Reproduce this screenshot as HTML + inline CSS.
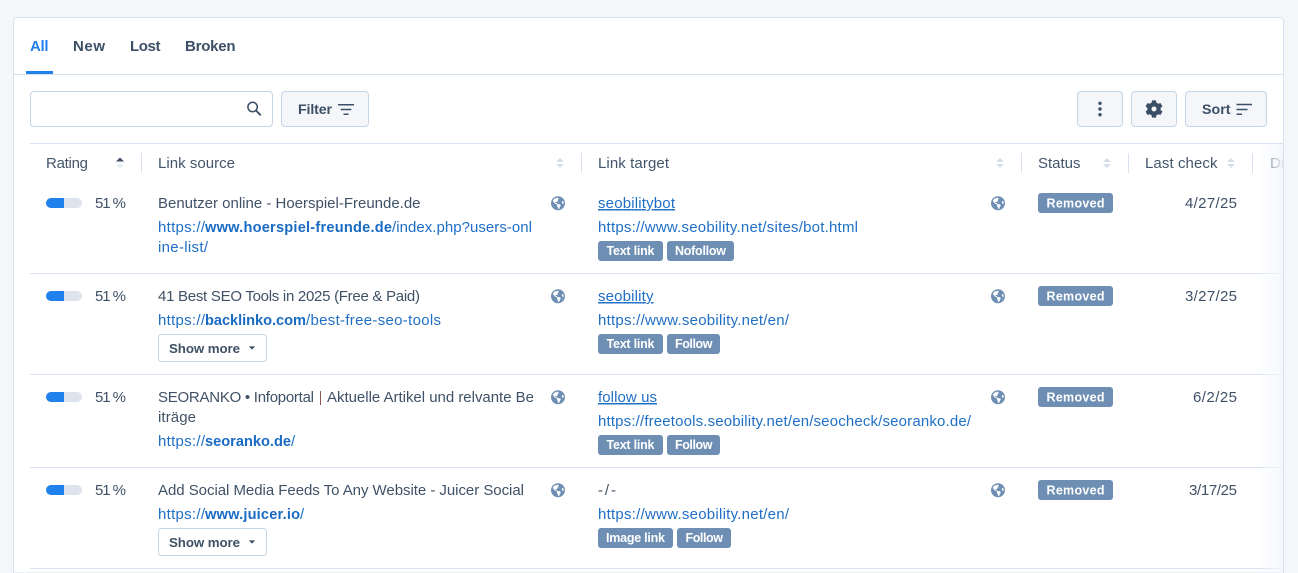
<!DOCTYPE html>
<html lang="en"><head><meta charset="utf-8"><title>Backlinks</title>
<style>
html,body{margin:0;padding:0;background:#f4f6fa;width:1298px;height:573px;overflow:hidden}
svg{display:block}
text{font-family:"Liberation Sans",sans-serif;font-size:15px;fill:#3f5166}
.tab{font-weight:700;font-size:15px;fill:#3b4f66}
.btn{font-weight:700;font-size:14.2px;fill:#3b4f66}
.h{font-size:15px;fill:#43566c}
.l{fill:#1f6fc6}
.b{fill:#1a6bc4;font-weight:700;font-size:14.6px}
.bd{font-weight:700;font-size:12.5px;fill:#fff}
.sm{font-weight:700;font-size:13.3px;fill:#3f5166}
.badge{fill:#6e8fb3}
.sep{stroke:#d8e2ee;stroke-width:1}
.ctl{fill:#f4f6fa;stroke:#c5d4e6;stroke-width:1}
</style></head><body>
<svg width="1298" height="573" viewBox="0 0 1298 573" xmlns="http://www.w3.org/2000/svg">
<defs>
<linearGradient id="fade" x1="0" x2="1" y1="0" y2="0"><stop offset="0" stop-color="#f3f6fa" stop-opacity="0"/><stop offset="1" stop-color="#f3f6fa" stop-opacity=".9"/></linearGradient>
<g id="globe"><g transform="translate(-7 -7) scale(.0282)"><path fill="#6e8fb3" d="M248 8C111.03 8 0 119.03 0 256s111.03 248 248 248 248-111.03 248-248S384.97 8 248 8zm82.29 357.6c-3.9 3.88-7.99 7.95-11.31 11.28-2.99 3-5.1 6.7-6.17 10.71-1.51 5.66-2.73 11.38-4.77 16.87l-17.39 46.85c-13.76 3-28 4.69-42.65 4.69v-27.38c1.69-12.62-7.64-36.26-22.63-51.25-6-6-9.37-14.14-9.37-22.63v-32.01c0-11.64-6.27-22.34-16.46-27.97-14.37-7.95-34.81-19.06-48.81-26.11-11.48-5.78-22.1-13.14-31.65-21.75l-.8-.72a114.792 114.792 0 0 1-18.06-20.74c-9.38-13.77-24.66-36.42-34.59-51.14 20.47-45.5 57.36-82.04 103.2-101.89l24.01 12.01C203.48 89.74 216 82.01 216 70.11v-11.3c7.99-1.29 16.12-2.11 24.42-2.43l28.3 28.3c6.25 6.25 6.25 16.38 0 22.63L264 112l-10.34 10.34c-3.13 3.12-3.13 8.19 0 11.31l4.69 4.69c3.13 3.12 3.13 8.19 0 11.31l-8 8a8.008 8.008 0 0 1-5.66 2.34h-8.99c-2.08 0-4.08.81-5.58 2.27l-9.92 9.65a8.008 8.008 0 0 0-1.58 9.31l15.59 31.19c2.66 5.32-1.21 11.58-7.15 11.58h-5.64c-1.93 0-3.79-.7-5.24-1.96l-9.28-8.06a16.017 16.017 0 0 0-15.55-3.1l-31.17 10.39a11.95 11.95 0 0 0-8.17 11.34c0 4.53 2.56 8.66 6.61 10.69l11.08 5.54c9.41 4.71 19.79 7.16 30.31 7.16s22.59 27.29 32 32h66.75c8.49 0 16.62 3.37 22.63 9.37l13.69 13.69a30.503 30.503 0 0 1 8.93 21.57 46.536 46.536 0 0 1-13.72 32.98zM417 274.25c-5.79-1.45-10.84-5-14.15-9.97l-17.98-26.97a23.97 23.97 0 0 1 0-26.62l19.59-29.38c2.32-3.47 5.5-6.29 9.24-8.15l12.98-6.49C440.2 193.59 448 223.87 448 256c0 8.67-.74 17.16-1.82 25.54L417 274.25z"/></g></g>
<g id="sort"><path d="M0-5 4-1H-4ZM0 5 4 1H-4Z" fill="#d5dfeb"/></g>
<g id="bar"><rect x="0" y="0" width="36" height="10" rx="5" fill="#dde4ee"/><path d="M5 0H18V10H5A5 5 0 0 1 5 0Z" fill="#2081ec"/></g>
<g id="caret"><path d="M-3.2-1.6H3.2L0 1.6Z" fill="#3f5166"/></g>
</defs>
<rect x="0" y="0" width="1298" height="573" fill="#f4f6fa"/>
<path d="M13.5 573V21.5a4 4 0 0 1 4-4H1279.5a4 4 0 0 1 4 4V573Z" fill="#fff" stroke="#d8e2ee"/>
<line x1="14" x2="1283" y1="74.5" y2="74.5" stroke="#d3dfec"/>
<rect x="26" y="71" width="27" height="3" fill="#2081ec"/>
<text class="tab" x="30" y="51" textLength="18.5" style="fill:#2081ec">All</text>
<text class="tab" x="73" y="51" textLength="32">New</text>
<text class="tab" x="130" y="51" textLength="30.5">Lost</text>
<text class="tab" x="185" y="51" textLength="50.5">Broken</text>

<rect x="30.5" y="91.5" width="242" height="35" rx="3.5" fill="#fff" stroke="#c5d4e6"/>
<circle cx="252.6" cy="107" r="4.7" fill="none" stroke="#3b4f66" stroke-width="1.5"/>
<path d="M256 110.5 260.7 115.3" stroke="#3b4f66" stroke-width="1.9" fill="none"/>
<rect class="ctl" x="281.5" y="91.5" width="87" height="35" rx="3.5"/>
<text class="btn" x="298" y="114" textLength="34">Filter</text>
<path d="M338 104.7H354M340.7 109.5H351.3M343.5 114.3H348.5" stroke="#3b4f66" stroke-width="1.5" fill="none"/>

<rect class="ctl" x="1077.5" y="91.5" width="45" height="35" rx="3.5"/>
<circle cx="1100" cy="103.3" r="1.7" fill="#3b4f66"/><circle cx="1100" cy="109" r="1.7" fill="#3b4f66"/><circle cx="1100" cy="114.7" r="1.7" fill="#3b4f66"/>
<rect class="ctl" x="1131.5" y="91.5" width="45" height="35" rx="3.5"/>
<g transform="translate(1154 109)" fill="#3b4f66">
<circle r="4.6" fill="none" stroke="#3b4f66" stroke-width="4.2"/>
<path d="M-2-8.6H2L2.6-5H-2.6Z"/>
<path d="M-2-8.6H2L2.6-5H-2.6Z" transform="rotate(60)"/>
<path d="M-2-8.6H2L2.6-5H-2.6Z" transform="rotate(120)"/>
<path d="M-2-8.6H2L2.6-5H-2.6Z" transform="rotate(180)"/>
<path d="M-2-8.6H2L2.6-5H-2.6Z" transform="rotate(240)"/>
<path d="M-2-8.6H2L2.6-5H-2.6Z" transform="rotate(300)"/>
</g>
<rect class="ctl" x="1185.5" y="91.5" width="81" height="35" rx="3.5"/>
<text class="btn" x="1202" y="114" textLength="28.5">Sort</text>
<path d="M1236.5 104.5H1252M1236.5 109.5H1247.5M1236.5 114.3H1242" stroke="#3b4f66" stroke-width="1.5" fill="none"/>

<line x1="30" x2="1283" y1="143.5" y2="143.5" class="sep"/>
<text class="h" x="46" y="168" textLength="42">Rating</text>
<text class="h" x="158" y="168" textLength="77">Link source</text>
<text class="h" x="598" y="168" textLength="71">Link target</text>
<text class="h" x="1038" y="168" textLength="42.5">Status</text>
<text class="h" x="1145" y="168" textLength="72.5">Last check</text>
<text class="h" x="1270" y="168" textLength="14" style="fill:#5e7085">Di</text>
<g class="sep"><line x1="141.5" x2="141.5" y1="153" y2="173"/><line x1="581.5" x2="581.5" y1="153" y2="173"/><line x1="1021.5" x2="1021.5" y1="153" y2="173"/><line x1="1128.5" x2="1128.5" y1="153" y2="173"/><line x1="1252.5" x2="1252.5" y1="153" y2="173"/></g>
<path d="M120 157.5 124 161.5H116Z" fill="#3b4f66"/><path d="M120 168.5 124 164.5H116Z" fill="#e6ebf2"/>
<use href="#sort" x="560" y="163"/><use href="#sort" x="1000" y="163"/><use href="#sort" x="1107" y="163"/><use href="#sort" x="1231" y="163"/>

<!-- row 1 -->
<use href="#bar" x="46" y="198"/><text x="95" y="208" textLength="31">51 %</text>
<text x="158" y="208" textLength="262.5">Benutzer online - Hoerspiel-Freunde.de</text>
<text class="l" x="158" y="232" textLength="47">https://</text><text class="b" x="205" y="232" textLength="187">www.hoerspiel-freunde.de</text><text class="l" x="392" y="232" textLength="140">/index.php?users-onl</text>
<text class="l" x="158" y="252" textLength="50">ine-list/</text>
<use href="#globe" x="558" y="203"/>
<text class="l" x="598" y="208" textLength="77" text-decoration="underline">seobilitybot</text>
<use href="#globe" x="998" y="203"/>
<text class="l" x="598" y="232" textLength="260">https://www.seobility.net/sites/bot.html</text>
<rect class="badge" x="598" y="241" width="65" height="20" rx="3"/><text class="bd" x="606.5" y="255" textLength="48">Text link</text>
<rect class="badge" x="667" y="241" width="67" height="20" rx="3"/><text class="bd" x="675" y="255" textLength="51">Nofollow</text>
<rect class="badge" x="1038" y="193" width="75" height="20" rx="3"/><text class="bd" x="1046.5" y="207.5" textLength="58">Removed</text>
<text x="1185" y="208" textLength="52">4/27/25</text>
<line x1="30" x2="1283" y1="273.5" y2="273.5" class="sep"/>

<!-- row 2 -->
<use href="#bar" x="46" y="291"/><text x="95" y="301" textLength="31">51 %</text>
<text x="158" y="301" textLength="262">41 Best SEO Tools in 2025 (Free &amp; Paid)</text>
<text class="l" x="158" y="325" textLength="47">https://</text><text class="b" x="205" y="325" textLength="101">backlinko.com</text><text class="l" x="306" y="325" textLength="135">/best-free-seo-tools</text>
<rect x="158.5" y="334.5" width="108" height="27" rx="3" fill="#fff" stroke="#c5d4e6"/>
<text class="sm" x="169" y="353" textLength="71">Show more</text><use href="#caret" x="252" y="348"/>
<use href="#globe" x="558" y="296"/>
<text class="l" x="598" y="301" textLength="55.5" text-decoration="underline">seobility</text>
<use href="#globe" x="998" y="296"/>
<text class="l" x="598" y="325" textLength="191">https://www.seobility.net/en/</text>
<rect class="badge" x="598" y="334" width="65" height="20" rx="3"/><text class="bd" x="606.5" y="348" textLength="48">Text link</text>
<rect class="badge" x="667" y="334" width="53" height="20" rx="3"/><text class="bd" x="675" y="348" textLength="37.5">Follow</text>
<rect class="badge" x="1038" y="286" width="75" height="20" rx="3"/><text class="bd" x="1046.5" y="300.5" textLength="58">Removed</text>
<text x="1185" y="301" textLength="52">3/27/25</text>
<line x1="30" x2="1283" y1="374.5" y2="374.5" class="sep"/>

<!-- row 3 -->
<use href="#bar" x="46" y="392"/><text x="95" y="402" textLength="31">51 %</text>
<text x="158" y="402" textLength="156">SEORANKO • Infoportal</text>
<rect x="320" y="391" width="1" height="14" fill="#8a5a50"/>
<text x="327" y="402" textLength="207">Aktuelle Artikel und relvante Be</text>
<text x="158" y="422" textLength="38">iträge</text>
<text class="l" x="158" y="446" textLength="47">https://</text><text class="b" x="205" y="446" textLength="86">seoranko.de</text><text class="l" x="291" y="446" textLength="4.5">/</text>
<use href="#globe" x="558" y="397"/>
<text class="l" x="598" y="402" textLength="59" text-decoration="underline">follow us</text>
<use href="#globe" x="998" y="397"/>
<text class="l" x="598" y="426" textLength="373">https://freetools.seobility.net/en/seocheck/seoranko.de/</text>
<rect class="badge" x="598" y="435" width="65" height="20" rx="3"/><text class="bd" x="606.5" y="449" textLength="48">Text link</text>
<rect class="badge" x="667" y="435" width="53" height="20" rx="3"/><text class="bd" x="675" y="449" textLength="37.5">Follow</text>
<rect class="badge" x="1038" y="387" width="75" height="20" rx="3"/><text class="bd" x="1046.5" y="401.5" textLength="58">Removed</text>
<text x="1193" y="402" textLength="44">6/2/25</text>
<line x1="30" x2="1283" y1="467.5" y2="467.5" class="sep"/>

<!-- row 4 -->
<use href="#bar" x="46" y="485"/><text x="95" y="495" textLength="31">51 %</text>
<text x="158" y="495" textLength="366">Add Social Media Feeds To Any Website - Juicer Social</text>
<text class="l" x="158" y="519" textLength="47">https://</text><text class="b" x="205" y="519" textLength="95">www.juicer.io</text><text class="l" x="300" y="519" textLength="4.5">/</text>
<rect x="158.5" y="528.5" width="108" height="27" rx="3" fill="#fff" stroke="#c5d4e6"/>
<text class="sm" x="169" y="547" textLength="71">Show more</text><use href="#caret" x="252" y="542"/>
<use href="#globe" x="558" y="490"/>
<text x="598" y="495" textLength="18">-/-</text>
<use href="#globe" x="998" y="490"/>
<text class="l" x="598" y="519" textLength="191">https://www.seobility.net/en/</text>
<rect class="badge" x="598" y="528" width="75" height="20" rx="3"/><text class="bd" x="606" y="542" textLength="59">Image link</text>
<rect class="badge" x="677" y="528" width="54" height="20" rx="3"/><text class="bd" x="685.5" y="542" textLength="37.5">Follow</text>
<rect class="badge" x="1038" y="480" width="75" height="20" rx="3"/><text class="bd" x="1046.5" y="494.5" textLength="58">Removed</text>
<text x="1189" y="495" textLength="48">3/17/25</text>
<line x1="30" x2="1283" y1="568.5" y2="568.5" class="sep"/>

<rect x="1258" y="144" width="25" height="429" fill="url(#fade)"/>
<line x1="1283.5" x2="1283.5" y1="22" y2="573" stroke="#d8e2ee"/>
</svg>
</body></html>
